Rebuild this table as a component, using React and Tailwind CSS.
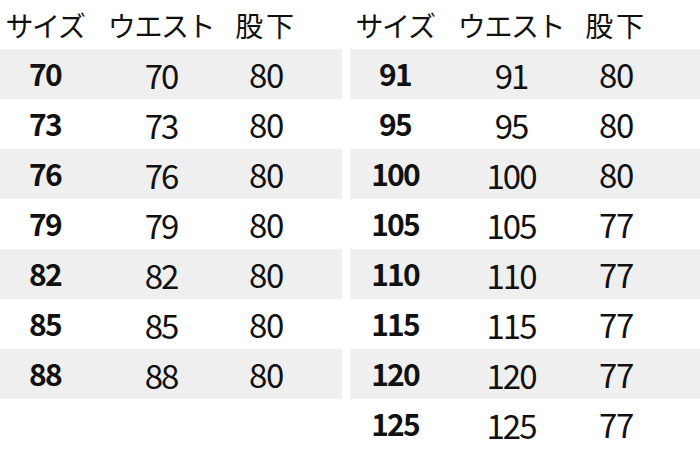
const left = [
  ["70", "70", "80"],
  ["73", "73", "80"],
  ["76", "76", "80"],
  ["79", "79", "80"],
  ["82", "82", "80"],
  ["85", "85", "80"],
  ["88", "88", "80"],
];

const right = [
  ["91", "91", "80"],
  ["95", "95", "80"],
  ["100", "100", "80"],
  ["105", "105", "77"],
  ["110", "110", "77"],
  ["115", "115", "77"],
  ["120", "120", "77"],
  ["125", "125", "77"],
];

const font = { fontFamily: '"Noto Sans CJK JP", "Noto Sans", sans-serif' };

function SizeTable({ rows, width }) {
  return (
    <div className={width}>
      <div className="grid h-[49px] grid-cols-[90px_142px_68px_1fr] items-center whitespace-nowrap text-[28px] leading-none text-[#111]">
        <span className="text-center tracking-[-0.05em]">サイズ</span>
        <span className="text-center tracking-[-0.05em]">ウエスト</span>
        <span className="text-center tracking-[0.1em]">股下</span>
      </div>
      {rows.map(([size, waist, inseam], i) => (
        <div
          key={size}
          className={
            "grid h-[50px] grid-cols-[90px_142px_68px_1fr] items-center leading-none text-[#111] " +
            (i % 2 === 0 ? "bg-[#efefef]" : "bg-white")
          }
        >
          <span className="text-center text-[30px] font-bold tracking-[-0.06em] pb-[2px]">{size}</span>
          <span className="text-center text-[33px] tracking-[-0.06em] pt-[2px]">{waist}</span>
          <span className="text-center text-[33px] tracking-[-0.04em]">{inseam}</span>
        </div>
      ))}
    </div>
  );
}

export default function App() {
  return (
    <main className="flex h-[451px] w-[700px] gap-2 overflow-hidden bg-white" style={font}>
      <SizeTable rows={left} width="w-[342px]" />
      <SizeTable rows={right} width="w-[350px]" />
    </main>
  );
}
